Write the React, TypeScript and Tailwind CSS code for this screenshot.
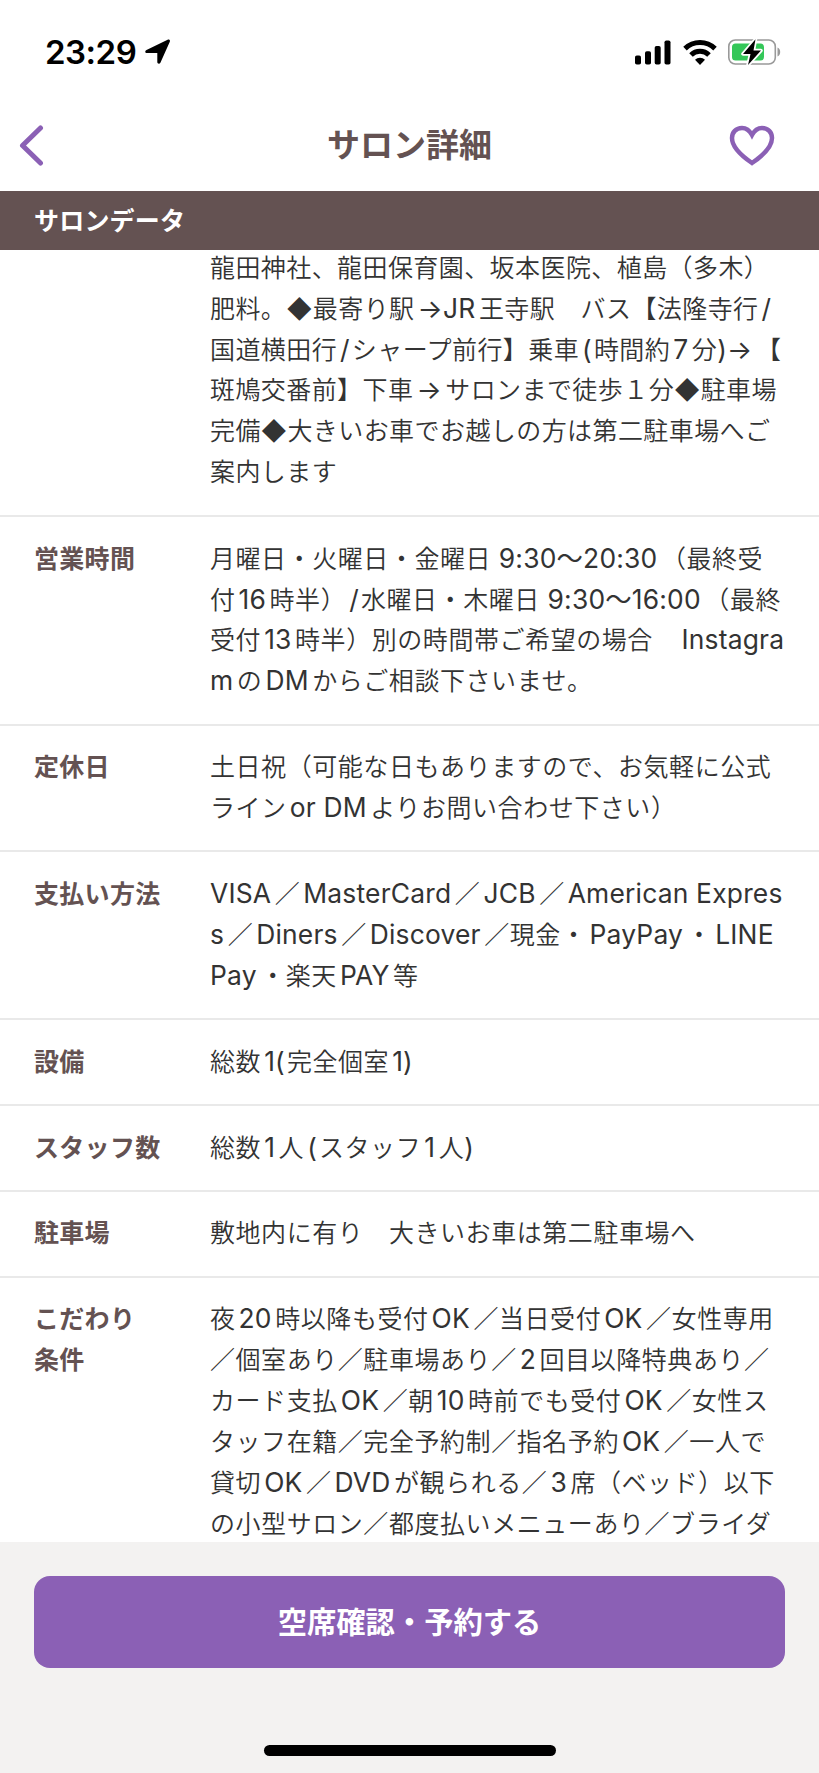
type Row = {
  label: string[];
  lines: string[];
};

const accessLines = [
  "龍田神社、龍田保育園、坂本医院、植島（多木）",
  "肥料。◆最寄り駅→JR王寺駅　バス【法隆寺行/",
  "国道横田行/シャープ前行】乗車(時間約7分)→【",
  "斑鳩交番前】下車→サロンまで徒歩１分◆駐車場",
  "完備◆大きいお車でお越しの方は第二駐車場へご",
  "案内します",
];

const rows: Row[] = [
  {
    label: ["営業時間"],
    lines: [
      "月曜日・火曜日・金曜日 9:30〜20:30（最終受",
      "付16時半）/水曜日・木曜日 9:30〜16:00（最終",
      "受付13時半）別の時間帯ご希望の場合　Instagra",
      "mのDMからご相談下さいませ。",
    ],
  },
  {
    label: ["定休日"],
    lines: [
      "土日祝（可能な日もありますので、お気軽に公式",
      "ラインor DMよりお問い合わせ下さい）",
    ],
  },
  {
    label: ["支払い方法"],
    lines: [
      "VISA／MasterCard／JCB／American Expres",
      "s／Diners／Discover／現金・PayPay・LINE",
      "Pay・楽天PAY等",
    ],
  },
  { label: ["設備"], lines: ["総数1(完全個室1)"] },
  { label: ["スタッフ数"], lines: ["総数1人(スタッフ1人)"] },
  { label: ["駐車場"], lines: ["敷地内に有り　大きいお車は第二駐車場へ"] },
  {
    label: ["こだわり", "条件"],
    lines: [
      "夜20時以降も受付OK／当日受付OK／女性専用",
      "／個室あり／駐車場あり／2回目以降特典あり／",
      "カード支払OK／朝10時前でも受付OK／女性ス",
      "タッフ在籍／完全予約制／指名予約OK／一人で",
      "貸切OK／DVDが観られる／3席（ベッド）以下",
      "の小型サロン／都度払いメニューあり／ブライダ",
    ],
  },
];

const latin = /([A-Za-z0-9:〜→/() ]+)/;

// Latin runs get a little air on both sides, as Japanese typesetting does,
// less so on the inner side of a bracket.
function Line({ text }: { text: string }) {
  const parts = text.split(latin).filter(Boolean);
  return (
    <span className="block whitespace-pre">
      {parts.map((part, i) =>
        latin.test(part) ? (
          <span
            key={i}
            className={`text-[26.4px] leading-none font-normal tracking-[0.2px] ${
              i === 0 || /^[) ]/.test(part) ? "" : "ml-[3px]"
            } ${/[(/]$/.test(part) ? "mr-[2px]" : "mr-[3.5px]"}`}
          >
            {part}
          </span>
        ) : (
          <span key={i}>{part}</span>
        ),
      )}
    </span>
  );
}

function StatusBar() {
  return (
    <div className="flex h-[104px] shrink-0 items-center justify-between pr-[38px] pl-[45px] text-black">
      <div className="flex items-center gap-[9px]">
        <span className="text-[33px] leading-none font-semibold tracking-[-0.5px]">23:29</span>
        <svg width="26" height="26" viewBox="0 0 26 26" aria-hidden>
          <path
            d="M1.5 11 22.6.8c1.6-.7 2.8.5 2.2 2L15.4 23.8c-.8 1.7-3.1 1.2-3.1-.7v-9H2C-.1 14.1-.4 11.9 1.5 11Z"
            fill="currentColor"
          />
        </svg>
      </div>
      <div className="flex items-center gap-[11.5px]">
        <svg width="36" height="25" viewBox="0 0 36 25" aria-hidden>
          <rect x="0" y="15.5" width="6" height="9" rx="1.8" />
          <rect x="10" y="11.3" width="6" height="13.2" rx="1.8" />
          <rect x="19.7" y="6" width="6" height="18.5" rx="1.8" />
          <rect x="29.5" y="0.5" width="6" height="24" rx="1.8" />
        </svg>
        <svg width="34" height="25" viewBox="0 0 34 25" aria-hidden>
          <path
            d="M2 8.600a21.500 21.500 0 0 1 30 0M8 15a12.700 12.700 0 0 1 18 0"
            fill="none"
            stroke="currentColor"
            strokeWidth="5"
          />
          <path d="M17 25l-5-5.200a7 7 0 0 1 10 0Z" />
        </svg>
        <svg width="53" height="28" viewBox="0 0 53 28" aria-hidden>
          <rect
            x="0.8"
            y="2"
            width="46.5"
            height="24"
            rx="6.5"
            fill="none"
            stroke="#999"
            strokeWidth="1.6"
          />
          <path d="M49.500 9.500v9c3.600-1.500 3.600-7.500 0-9Z" fill="#999" />
          <rect x="4" y="5.5" width="32" height="17" rx="3.5" fill="#34c759" />
          <path
            d="M27.500 1.300 15 16h7.500L20 27 33 12.500h-7.500Z"
            stroke="#fff"
            strokeWidth="3.5"
            strokeLinejoin="round"
            paintOrder="stroke"
          />
        </svg>
      </div>
    </div>
  );
}

function NavBar() {
  return (
    <header className="grid h-[87px] shrink-0 grid-cols-[1fr_auto_1fr] items-center px-[19px] pb-[5px]">
      <button type="button" aria-label="戻る" className="text-[#8b60b5]">
        <svg width="25" height="41" viewBox="0 0 25 41" fill="none" aria-hidden>
          <path
            d="M21.500 3 3.500 20.500 21.500 38"
            stroke="currentColor"
            strokeWidth="5"
            strokeLinecap="round"
            strokeLinejoin="round"
          />
        </svg>
      </button>
      <h1 className="text-[33px] leading-none font-bold text-[#645252]">サロン詳細</h1>
      <button
        type="button"
        aria-label="お気に入り"
        className="mr-[25px] justify-self-end text-[#8b60b5]"
      >
        <svg width="46" height="41" viewBox="0 0 46 41" fill="none" aria-hidden>
          <path
            d="M23 10C20 4.500 16.500 3 13 3 7 3 3 7.500 3 13c0 9.500 9 17.500 20 25 11-7.500 20-15.500 20-25 0-5.500-4-10-10-10-3.500 0-7 1.500-10 7Z"
            stroke="currentColor"
            strokeWidth="4.5"
          />
        </svg>
      </button>
    </header>
  );
}

export default function App() {
  return (
    <div className="flex h-[1773px] w-[819px] flex-col overflow-hidden bg-white font-[Inter,'Noto_Sans_CJK_JP',sans-serif]">
      <StatusBar />
      <NavBar />
      <h2 className="flex h-[59px] shrink-0 items-center bg-[#645252] pt-[2px] pl-[34px] text-[25px] font-bold tracking-[0.2px] text-white">
        サロンデータ
      </h2>

      <main className="min-h-0 flex-1 overflow-hidden text-[25px] leading-[40.9px] font-[350] tracking-[0.56px] text-[#333]">
        <div className="flow-root h-[267px] border-b-2 border-[#e9e9e9] pl-[210px] leading-[40.8px] tracking-[0.42px]">
          <div className="-mt-[2px]">
            {accessLines.map((line) => (
              <Line key={line} text={line} />
            ))}
          </div>
        </div>
        <dl>
          {rows.map(({ label, lines }) => (
            <div
              key={label[0]}
              className="flex border-b-2 border-[#e9e9e9] pt-[21.6px] pb-[21.4px]"
            >
              <dt className="w-[210px] shrink-0 pl-[34px] font-bold tracking-[0.3px] text-[#645252]">
                {label.map((line) => (
                  <Line key={line} text={line} />
                ))}
              </dt>
              <dd>
                {lines.map((line) => (
                  <Line key={line} text={line} />
                ))}
              </dd>
            </div>
          ))}
        </dl>
      </main>

      <footer className="flex h-[231px] shrink-0 flex-col items-center justify-between bg-[#f3f2f1] px-[34px] pt-[34px] pb-[17px]">
        <button
          type="button"
          className="h-[92px] w-full rounded-2xl bg-[#8b60b5] pt-[2px] text-[29.3px] font-bold text-white"
        >
          空席確認・予約する
        </button>
        <div className="h-[11px] w-[292px] rounded-full bg-black" />
      </footer>
    </div>
  );
}
